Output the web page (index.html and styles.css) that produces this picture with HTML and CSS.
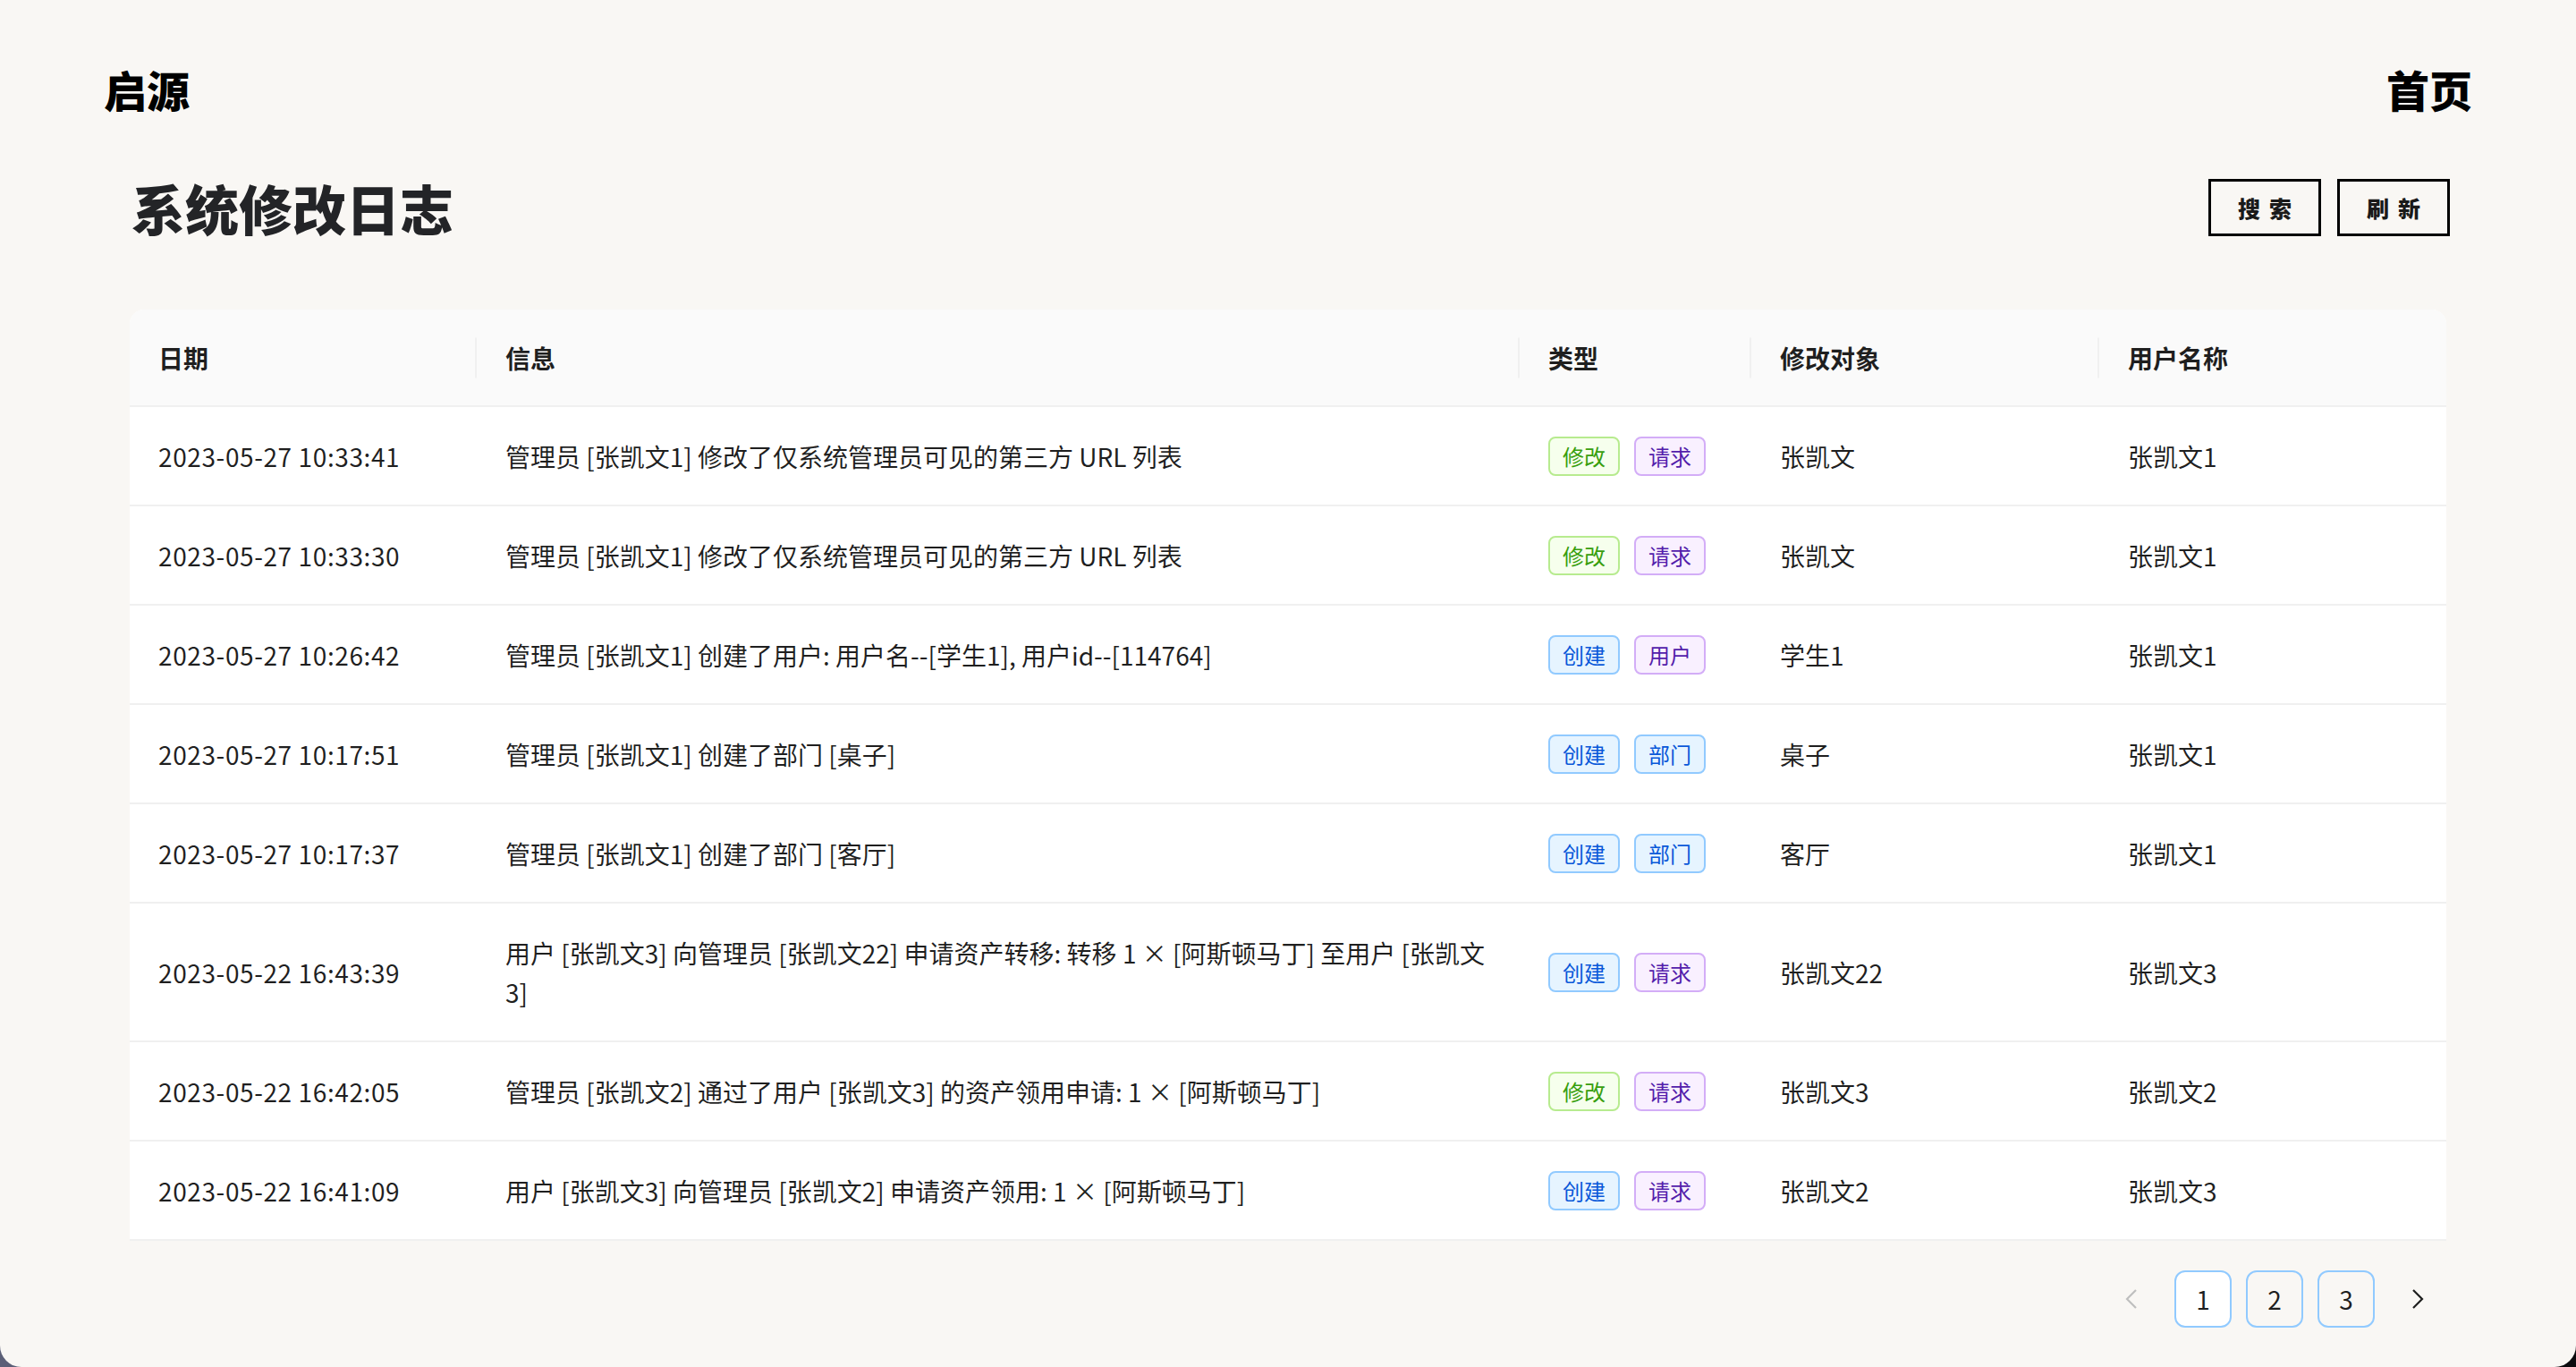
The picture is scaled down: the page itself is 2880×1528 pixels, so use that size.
FILE: index.html
```html
<!DOCTYPE html>
<html lang="zh-CN">
<head>
<meta charset="utf-8">
<title>系统修改日志</title>
<link rel="stylesheet" href="styles.css">
</head>
<body>
<div class="page">
  <header class="topbar">
    <div class="brand">启源</div>
    <nav class="nav">首页</nav>
  </header>
  <main class="content">
    <div class="title-row">
      <h1 class="title">系统修改日志</h1>
      <div class="actions">
        <button class="btn">搜索</button>
        <button class="btn">刷新</button>
      </div>
    </div>
    <div class="table-wrap">
      <table class="log-table">
        <colgroup>
          <col class="c-date"><col class="c-info"><col class="c-type"><col class="c-obj"><col class="c-user">
        </colgroup>
        <thead>
          <tr>
            <th class="sep">日期</th>
            <th class="sep">信息</th>
            <th class="sep">类型</th>
            <th class="sep">修改对象</th>
            <th>用户名称</th>
          </tr>
        </thead>
        <tbody>
          <tr>
            <td class="date">2023-05-27 10:33:41</td>
            <td>管理员 [张凯文1] 修改了仅系统管理员可见的第三方 URL 列表</td>
            <td><div class="tags"><span class="tag green">修改</span><span class="tag purple">请求</span></div></td>
            <td>张凯文</td>
            <td>张凯文1</td>
          </tr>
          <tr>
            <td class="date">2023-05-27 10:33:30</td>
            <td>管理员 [张凯文1] 修改了仅系统管理员可见的第三方 URL 列表</td>
            <td><div class="tags"><span class="tag green">修改</span><span class="tag purple">请求</span></div></td>
            <td>张凯文</td>
            <td>张凯文1</td>
          </tr>
          <tr>
            <td class="date">2023-05-27 10:26:42</td>
            <td>管理员 [张凯文1] 创建了用户: 用户名--[学生1], 用户id--[114764]</td>
            <td><div class="tags"><span class="tag blue">创建</span><span class="tag purple">用户</span></div></td>
            <td>学生1</td>
            <td>张凯文1</td>
          </tr>
          <tr>
            <td class="date">2023-05-27 10:17:51</td>
            <td>管理员 [张凯文1] 创建了部门 [桌子]</td>
            <td><div class="tags"><span class="tag blue">创建</span><span class="tag blue">部门</span></div></td>
            <td>桌子</td>
            <td>张凯文1</td>
          </tr>
          <tr>
            <td class="date">2023-05-27 10:17:37</td>
            <td>管理员 [张凯文1] 创建了部门 [客厅]</td>
            <td><div class="tags"><span class="tag blue">创建</span><span class="tag blue">部门</span></div></td>
            <td>客厅</td>
            <td>张凯文1</td>
          </tr>
          <tr>
            <td class="date">2023-05-22 16:43:39</td>
            <td>用户 [张凯文3] 向管理员 [张凯文22] 申请资产转移: 转移 1 × [阿斯顿马丁] 至用户 [张凯文3]</td>
            <td><div class="tags"><span class="tag blue">创建</span><span class="tag purple">请求</span></div></td>
            <td>张凯文22</td>
            <td>张凯文3</td>
          </tr>
          <tr>
            <td class="date">2023-05-22 16:42:05</td>
            <td>管理员 [张凯文2] 通过了用户 [张凯文3] 的资产领用申请: 1 × [阿斯顿马丁]</td>
            <td><div class="tags"><span class="tag green">修改</span><span class="tag purple">请求</span></div></td>
            <td>张凯文3</td>
            <td>张凯文2</td>
          </tr>
          <tr>
            <td class="date">2023-05-22 16:41:09</td>
            <td>用户 [张凯文3] 向管理员 [张凯文2] 申请资产领用: 1 × [阿斯顿马丁]</td>
            <td><div class="tags"><span class="tag blue">创建</span><span class="tag purple">请求</span></div></td>
            <td>张凯文2</td>
            <td>张凯文3</td>
          </tr>
        </tbody>
      </table>
    </div>
    <ul class="pager">
      <li class="pg-arrow disabled">
        <svg width="16" height="24" viewBox="0 0 16 24"><path d="M13 2 L3 12 L13 22" fill="none" stroke="currentColor" stroke-width="2.2"/></svg>
      </li>
      <li class="pg-item active">1</li>
      <li class="pg-item">2</li>
      <li class="pg-item">3</li>
      <li class="pg-arrow">
        <svg width="16" height="24" viewBox="0 0 16 24"><path d="M3 2 L13 12 L3 22" fill="none" stroke="currentColor" stroke-width="2.2"/></svg>
      </li>
    </ul>
  </main>
</div>
</body>
</html>
```

FILE: styles.css
```css
* { box-sizing: border-box; }
html, body { margin: 0; padding: 0; }
body {
  background: linear-gradient(to right, #5b5f77, #0b0b0e);
  font-family: "Noto Sans CJK SC", "Noto Sans", sans-serif;
  color: rgba(0, 0, 0, 0.88);
}
.page {
  width: 2880px;
  height: 1528px;
  background: #f9f7f4;
  border-radius: 0 0 24px 24px;
  overflow: hidden;
}
.topbar {
  display: flex;
  justify-content: space-between;
  align-items: center;
  height: 62px;
  margin-top: 68px;
  padding: 0 116px 0 116px;
}
.brand, .nav {
  font-size: 48px;
  font-weight: 900;
  color: #000;
  line-height: 62px;
}
.content {
  padding: 0 145px;
}
.title-row {
  display: flex;
  justify-content: space-between;
  align-items: center;
  margin-top: 70px;
  margin-right: -4px;
  height: 64px;
}
.title {
  margin: 0;
  font-size: 60px;
  line-height: 64px;
  font-weight: 900;
  color: #232427;
  padding-left: 2px;
}
.actions {
  display: flex;
  gap: 18px;
  margin-top: 0;
}
.btn {
  width: 126px;
  height: 64px;
  border: 3px solid #000;
  background: transparent;
  font-family: "Noto Sans CJK SC", sans-serif;
  font-size: 25px;
  font-weight: 900;
  letter-spacing: 10px;
  padding: 0 0 0 10px;
  color: #1a1a1a;
}
.table-wrap {
  margin-top: 82px;
  background: #fff;
  border-radius: 16px 16px 0 0;
  overflow: hidden;
}
.log-table {
  width: 2590px;
  border-collapse: collapse;
  table-layout: fixed;
  font-size: 28px;
  line-height: 44px;
}
.c-date { width: 388px; }
.c-info { width: 1166px; }
.c-type { width: 259px; }
.c-obj { width: 389px; }
.c-user { width: 388px; }
.log-table th {
  position: relative;
  text-align: left;
  font-weight: 700;
  background: #fafafa;
  color: rgba(0, 0, 0, 0.88);
  padding: 31.5px 32px;
  border-bottom: 2px solid #f0f0f0;
}
.log-table th.sep::after {
  content: "";
  position: absolute;
  right: 0;
  top: 50%;
  width: 2px;
  height: 45px;
  transform: translateY(-50%);
  background: #f0f0f0;
}
.log-table td {
  padding: 32.5px 32px;
  border-bottom: 2px solid #f0f0f0;
  vertical-align: middle;
  color: rgba(0, 0, 0, 0.88);
}
.log-table td.date { letter-spacing: 0.6px; }
.tags {
  display: flex;
  align-items: center;
  gap: 16px;
  height: 44px;
}
.tag {
  display: block;
  height: 44px;
  padding: 0 14px;
  font-size: 24px;
  line-height: 40px;
  border: 2px solid;
  border-radius: 8px;
}
.tag.green { color: #389e0d; background: #f6ffed; border-color: #b7eb8f; }
.tag.purple { color: #531dab; background: #f9f0ff; border-color: #d3adf7; }
.tag.blue { color: #0958d9; background: #e6f4ff; border-color: #91caff; }
.pager {
  list-style: none;
  margin: 33px 0 0 0;
  padding: 0;
  display: flex;
  justify-content: flex-end;
  gap: 16px;
}
.pg-item, .pg-arrow {
  width: 64px;
  height: 64px;
  display: flex;
  align-items: center;
  justify-content: center;
  font-size: 28px;
  color: rgba(0, 0, 0, 0.88);
  border-radius: 12px;
}
.pg-item {
  border: 2px solid #91caff;
}
.pg-item.active { background: #fff; }
.pg-arrow { color: #1f1f1f; }
.pg-arrow.disabled { color: #bfbfbf; }
```
